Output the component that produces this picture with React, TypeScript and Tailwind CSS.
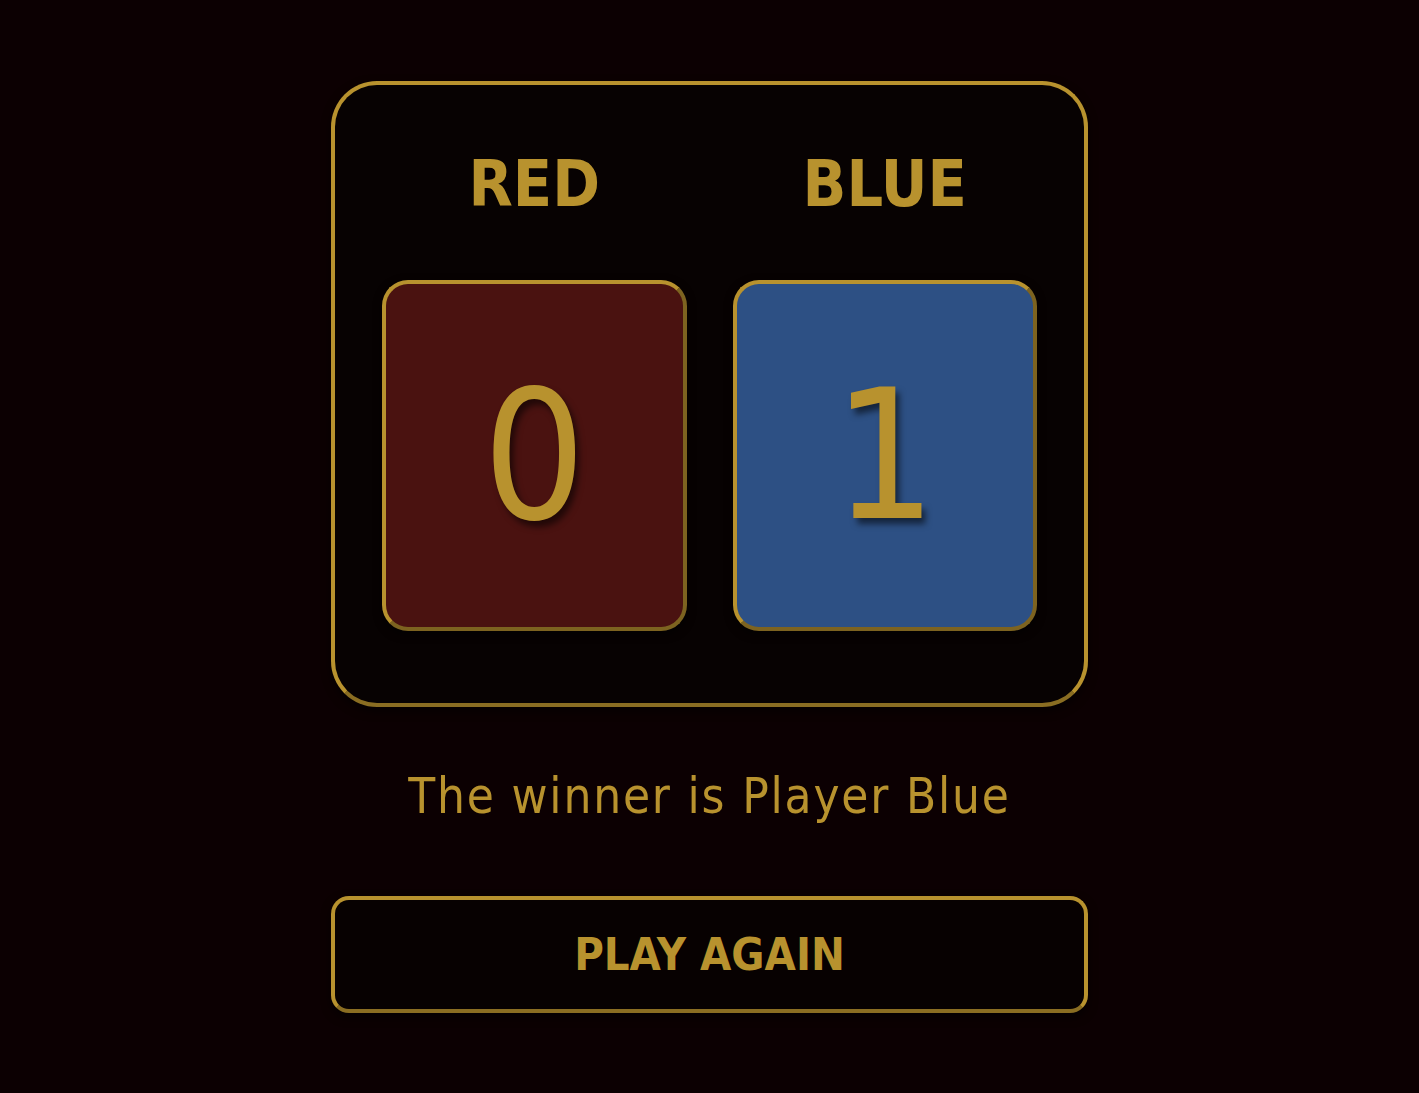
import React from "react";

export default function App() {
  return (
    <div
      className="min-h-[1093px] w-full bg-[#0c0002] flex flex-col items-center pt-[81px]"
      style={{ fontFamily: '"DejaVu Sans Condensed", "DejaVu Sans", sans-serif' }}
    >
      <div className="w-[757px] h-[626px] rounded-[46px] border-4 border-[#b8922e] border-b-[#8a6d22] bg-[#070202] px-[47px] pt-[59px] flex flex-col shadow-[0_4px_10px_rgba(0,0,0,0.6)]">
        <div className="grid grid-cols-2 gap-[46px]">
          <div className="text-center text-[64px] font-bold leading-[80px] text-[#b8922e]">RED</div>
          <div className="text-center text-[64px] font-bold leading-[80px] text-[#b8922e]">BLUE</div>
        </div>
        <div className="grid grid-cols-2 gap-[46px] mt-[56px]">
          <div className="h-[351px] rounded-[26px] border-4 border-[#b8922e] border-r-[#7d6320] border-b-[#7d6320] bg-[#4a1210] flex items-center justify-center shadow-[0_3px_8px_rgba(0,0,0,0.6)]">
            <span className="text-[180px] leading-none text-[#b8922e] [text-shadow:4px_6px_6px_rgba(0,0,0,0.55)]">0</span>
          </div>
          <div className="h-[351px] rounded-[26px] border-4 border-[#b8922e] border-r-[#7d6320] border-b-[#7d6320] bg-[#2d5084] flex items-center justify-center shadow-[0_3px_8px_rgba(0,0,0,0.6)]">
            <span className="text-[180px] leading-none text-[#b8922e] [text-shadow:4px_6px_6px_rgba(0,0,0,0.55)]">1</span>
          </div>
        </div>
      </div>
      <div className="mt-[60px] text-[49px] tracking-[1.8px] leading-[60px] text-[#b8922e]">The winner is Player Blue</div>
      <button className="mt-[69px] w-[757px] h-[117px] rounded-[18px] border-4 border-[#b8922e] border-b-[#8a6d22] bg-[#070101] text-[45px] font-bold text-[#b8922e] shadow-[0_4px_10px_rgba(0,0,0,0.6)]">
        PLAY AGAIN
      </button>
    </div>
  );
}
